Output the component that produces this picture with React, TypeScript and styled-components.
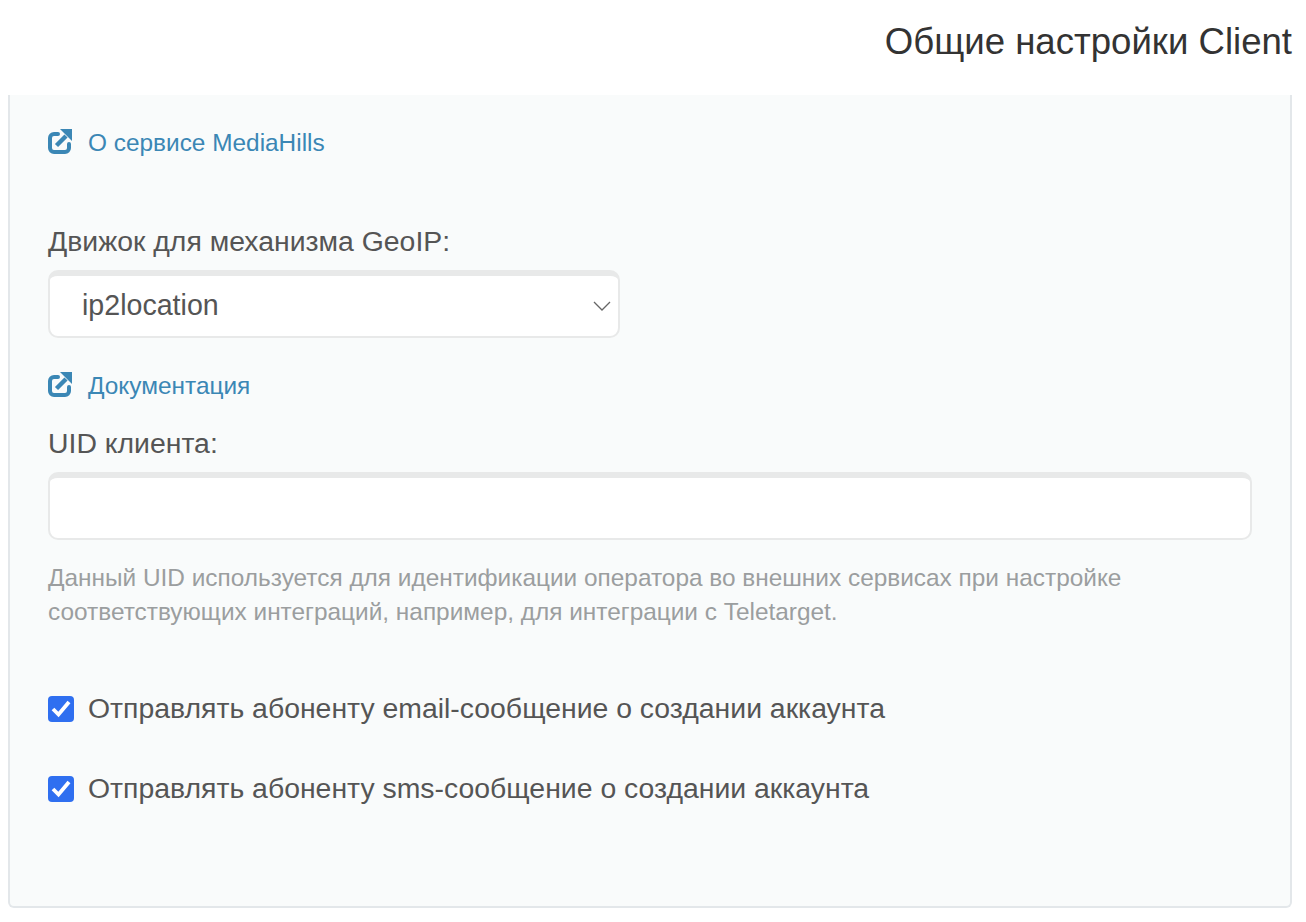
import React from "react";
import styled, { createGlobalStyle } from "styled-components";

const Global = createGlobalStyle`
  html, body { margin: 0; padding: 0; background: #fff; }
  body { font-family: "Liberation Sans", Arial, sans-serif; color: #555; }
`;

const Page = styled.div`
  width: 1306px;
  height: 922px;
  overflow: hidden;
  box-sizing: border-box;
  padding: 0 14px 14px 8px;
  display: flex;
  flex-direction: column;
`;

const Title = styled.h1`
  margin: 0;
  height: 95px;
  box-sizing: border-box;
  padding-top: 20px;
  text-align: right;
  font-size: 36.6px;
  line-height: 44px;
  font-weight: 400;
  color: #333;
`;

const Panel = styled.div`
  flex: 1;
  box-sizing: border-box;
  background: #f9fbfb;
  border: 2px solid #e3e7ea;
  border-top: 0;
  border-radius: 0 0 6px 6px;
  padding: 0 38px;
`;

const LinkRow = styled.a<{ $top: number }>`
  display: flex;
  align-items: center;
  gap: 16px;
  margin-top: ${(p) => p.$top}px;
  height: 34px;
  font-size: 24.4px;
  color: #3b87b5;
  text-decoration: none;
`;

const Label = styled.label<{ $top: number }>`
  display: block;
  margin-top: ${(p) => p.$top}px;
  font-size: 28.4px;
  line-height: 34px;
  color: #555;
`;

const FieldBase = styled.div`
  box-sizing: border-box;
  height: 68px;
  background: #fff;
  border: 2px solid #e8e9e9;
  border-top-width: 6px;
  border-radius: 10px;
`;

const SelectBox = styled(FieldBase)`
  width: 572px;
  margin-top: 12px;
  display: flex;
  align-items: center;
  justify-content: space-between;
  padding: 0 7px 1px 32px;
  font-size: 28.6px;
  color: #555;
`;

const TextBox = styled(FieldBase)`
  width: 1204px;
  margin-top: 12px;
`;

const Help = styled.p`
  margin: 21px 0 0;
  font-size: 24.4px;
  line-height: 34px;
  color: #9b9e9f;
`;

const CheckRow = styled.div<{ $top: number }>`
  display: flex;
  align-items: center;
  gap: 14px;
  margin-top: ${(p) => p.$top}px;
  height: 34px;
  font-size: 28.4px;
  color: #555;
`;

const CheckText = styled.span`
  margin-top: -2px;
`;

const Box = styled.span`
  width: 26px;
  height: 26px;
  border-radius: 4px;
  background: #2f6ff0;
  display: flex;
  align-items: center;
  justify-content: center;
`;

const IconSvg = styled.svg`
  flex: none;
  margin-bottom: 3px;
`;

const ExtIcon = () => (
  <IconSvg width="24" height="25" viewBox="0 0 24 25" fill="none">
    <path d="M10 5H6A4 4 0 0 0 2 9v10a4 4 0 0 0 4 4h11a4 4 0 0 0 4-4v-4" stroke="#3b87b5" strokeWidth="4" strokeLinecap="round" />
    <path d="M8.500 16.500 18 7" stroke="#3b87b5" strokeWidth="4.500" />
    <path d="M12 0h12v12z" fill="#3b87b5" />
  </IconSvg>
);

const Chevron = () => (
  <svg width="18" height="10" viewBox="0 0 18 10" fill="none">
    <path d="M1 1l8 8 8-8" stroke="#666" strokeWidth="1.300" />
  </svg>
);

const Check = () => (
  <svg width="26" height="26" viewBox="0 0 26 26" fill="none">
    <path d="M5 13l5.500 5.500L21 6" stroke="#fff" strokeWidth="3.800" />
  </svg>
);

export default function App() {
  return (
    <Page>
      <Global />
      <Title>Общие настройки Client</Title>
      <Panel>
        <LinkRow $top={31} href="#"><ExtIcon />О сервисе MediaHills</LinkRow>
        <Label $top={64}>Движок для механизма GeoIP:</Label>
        <SelectBox>ip2location<Chevron /></SelectBox>
        <LinkRow $top={31} href="#"><ExtIcon />Документация</LinkRow>
        <Label $top={23}>UID клиента:</Label>
        <TextBox />
        <Help>
          Данный UID используется для идентификации оператора во внешних сервисах при настройке
          <br />
          соответствующих интеграций, например, для интеграции с Teletarget.
        </Help>
        <CheckRow $top={63}><Box><Check /></Box><CheckText>Отправлять абоненту email-сообщение о создании аккаунта</CheckText></CheckRow>
        <CheckRow $top={46}><Box><Check /></Box><CheckText>Отправлять абоненту sms-сообщение о создании аккаунта</CheckText></CheckRow>
      </Panel>
    </Page>
  );
}
